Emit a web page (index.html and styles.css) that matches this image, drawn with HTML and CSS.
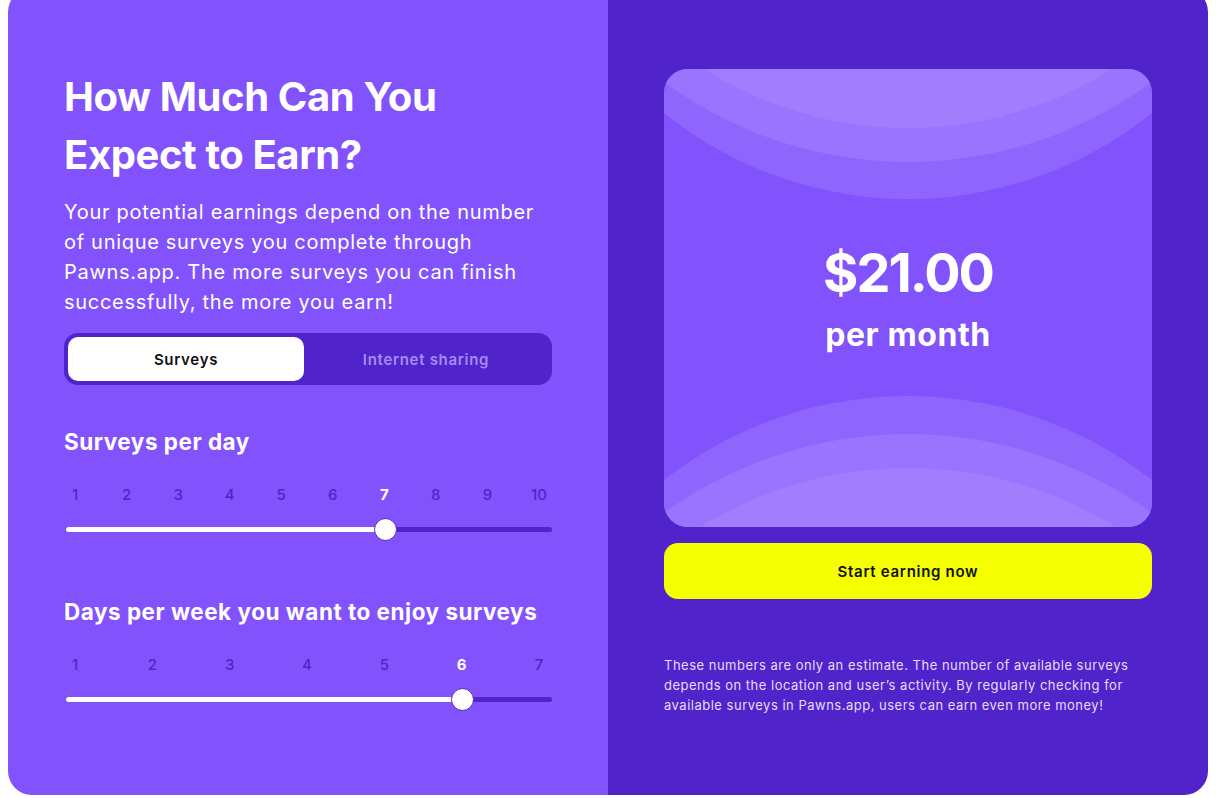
FILE: index.html
```html
<!DOCTYPE html>
<html>
	<head>
		<meta charset="utf-8">
		<title>Earnings calculator</title>
		<link rel="stylesheet" href="styles.css">
	</head>
	<body>
		<div class="calc">
			<!-- left: inputs -->
			<div class="calc-inputs">
				<h2 class="calc-title">How Much Can You<br>Expect to Earn?</h2>
				<p class="calc-lead">Your potential earnings depend on the number of unique surveys you complete through Pawns.app. The more surveys you can finish successfully, the more you earn!</p>

				<div class="switch">
					<button type="button" class="switch-btn active">Surveys</button>
					<button type="button" class="switch-btn">Internet sharing</button>
				</div>

				<h3 class="field-title first">Surveys per day</h3>
				<div class="ticks">
					<span>1</span><span>2</span><span>3</span><span>4</span><span>5</span>
					<span>6</span><span class="on">7</span><span>8</span><span>9</span><span>10</span>
				</div>
				<div class="slider">
					<div class="slider-fill" style="width: 319px"></div>
					<div class="slider-thumb" style="left: 319px"></div>
				</div>

				<h3 class="field-title">Days per week you want to enjoy surveys</h3>
				<div class="ticks">
					<span>1</span><span>2</span><span>3</span><span>4</span><span>5</span>
					<span class="on">6</span><span>7</span>
				</div>
				<div class="slider">
					<div class="slider-fill" style="width: 396px"></div>
					<div class="slider-thumb" style="left: 396px"></div>
				</div>
			</div>

			<!-- right: result -->
			<div class="calc-result">
				<div class="result-card">
					<svg class="result-waves" viewBox="0 0 488 458" preserveAspectRatio="none">
						<circle cx="244" cy="-259" r="389" fill="#8f66fd"/>
						<circle cx="244" cy="-319" r="412" fill="#9a74fe"/>
						<circle cx="244" cy="-323" r="382" fill="#a17efe"/>
						<circle cx="244" cy="723" r="396" fill="#8f66fd"/>
						<circle cx="244" cy="781" r="416" fill="#9a74fe"/>
						<circle cx="244" cy="795" r="396" fill="#a17efe"/>
					</svg>
					<div class="result-amount">$21.00</div>
					<div class="result-period">per month</div>
				</div>
				<button type="button" class="cta">Start earning now</button>
				<p class="note">These numbers are only an estimate. The number of available surveys depends on the location and user’s activity. By regularly checking for available surveys in Pawns.app, users can earn even more money!</p>
			</div>
		</div>
	</body>
</html>
```

FILE: styles.css
```css
body {
	margin: 0;
	background-color: #fff;
	font-family: Inter, "Liberation Sans", sans-serif;
	color: #fff;
	overflow: hidden;
}

.calc {
	display: flex;
	margin: -12px 8px 0 8px;
	height: 807px;
	border-radius: 24px;
	overflow: hidden;
}

.calc-inputs {
	width: 600px;
	box-sizing: border-box;
	padding: 80px 56px 0 56px;
	background-color: #8253fd;
}
.calc-result {
	width: 600px;
	box-sizing: border-box;
	padding: 81px 56px 0 56px;
	background-color: #5123ca;
}

.calc-title {
	margin: 0;
	font-size: 40px;
	line-height: 58px;
	font-weight: 700;
	letter-spacing: -0.4px;
}
.calc-lead {
	margin: 13px 0 0 0;
	font-size: 20px;
	line-height: 30px;
	font-weight: 400;
	letter-spacing: 0.7px;
}

.switch {
	display: flex;
	margin-top: 16px;
	padding: 4px;
	height: 44px;
	border-radius: 14px;
	background-color: #5123ca;
}
.switch-btn {
	flex: 0 0 236px;
	border: 0;
	border-radius: 10px;
	background: transparent;
	font-family: inherit;
	font-size: 15px;
	font-weight: 600;
	letter-spacing: 0.7px;
	color: #a88af7;
	cursor: pointer;
}
.switch-btn + .switch-btn {
	flex: 1;
}
.switch-btn.active {
	background-color: #fff;
	color: #111;
}

.field-title {
	margin: 65px 0 0 0;
	font-size: 22.5px;
	line-height: 30px;
	font-weight: 700;
	letter-spacing: 0.5px;
}
.field-title.first {
	margin-top: 42px;
}

.ticks {
	display: flex;
	justify-content: space-between;
	width: 486px;
	margin-top: 28px;
	font-size: 15px;
	line-height: 20px;
	font-weight: 500;
	color: #5123ca;
}
.ticks span {
	width: 22px;
	text-align: center;
}
.ticks .on {
	color: #fff;
	font-weight: 700;
}

.slider {
	position: relative;
	height: 5px;
	margin: 22px 0 0 2px;
	border-radius: 3px;
	background-color: #5123ca;
}
.slider-fill {
	height: 5px;
	border-radius: 3px;
	background-color: #fff;
}
.slider-thumb {
	position: absolute;
	top: -9px;
	width: 21px;
	height: 21px;
	margin-left: -11.5px;
	border: 1px solid #5123ca;
	border-radius: 50%;
	background-color: #fff;
}

.result-card {
	position: relative;
	display: flex;
	flex-direction: column;
	align-items: center;
	justify-content: center;
	height: 458px;
	border-radius: 24px;
	overflow: hidden;
	background-color: #8253fd;
}
.result-waves {
	position: absolute;
	left: 0;
	top: 0;
	width: 100%;
	height: 100%;
}
.result-amount {
	position: relative;
	font-size: 54px;
	line-height: 64px;
	font-weight: 700;
	letter-spacing: -2px;
}
.result-period {
	position: relative;
	margin-top: 10px;
	font-size: 32px;
	line-height: 40px;
	font-weight: 700;
	letter-spacing: 0.6px;
}

.cta {
	display: block;
	width: 100%;
	height: 56px;
	margin-top: 16px;
	border: 0;
	border-radius: 14px;
	background-color: #f5ff00;
	font-family: inherit;
	font-size: 15px;
	font-weight: 600;
	letter-spacing: 0.7px;
	color: #111;
	cursor: pointer;
}

.note {
	margin: 56px 0 0 0;
	font-size: 13px;
	line-height: 20px;
	color: #e6ddff;
	letter-spacing: 0.5px;
}
```
